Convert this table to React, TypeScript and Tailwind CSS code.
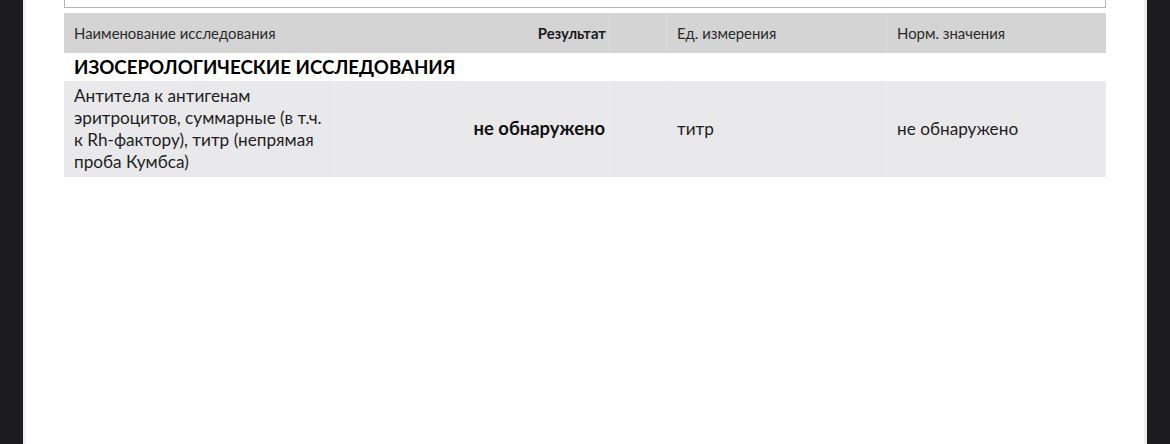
import React from "react";

export default function App() {
  return (
    <div className="flex h-[444px] w-[1170px] overflow-hidden bg-[#1c1c1e] font-['Lato',_'Noto_Sans',_sans-serif]">
      <div className="w-[23px] shrink-0" />
      <div className="flex w-[1124px] shrink-0 bg-white">
        <div className="w-[3px] shrink-0 bg-[#efefef]" />
        <div className="flex-1 pl-[38px] pr-[38px]">
          <div className="h-[8px] border-x border-b border-[#b4b4b4]" />
          <div className="mt-[5px] grid grid-cols-[271px_275px_57px_220px_219px]">
            {/* header */}
            <div className="flex h-[40px] items-center bg-[#d4d4d4] pl-[10px] text-[14.9px] text-[#2a2a2a]">
              Наименование исследования
            </div>
            <div className="flex h-[40px] items-center justify-end border-r border-[#d9d9d9] bg-[#d4d4d4] pr-[3px] text-[14.9px] font-bold text-[#1a1a1a]">
              Результат
            </div>
            <div className="h-[40px] border-r border-[#d9d9d9] bg-[#d4d4d4]" />
            <div className="flex h-[40px] items-center border-r border-[#d9d9d9] bg-[#d4d4d4] pl-[10px] text-[14.9px] text-[#2a2a2a]">
              Ед. измерения
            </div>
            <div className="flex h-[40px] items-center bg-[#d4d4d4] pl-[10px] text-[14.9px] text-[#2a2a2a]">
              Норм. значения
            </div>

            {/* section */}
            <div className="col-span-5 flex h-[28px] items-center pl-[10px] text-[18.7px] font-bold text-black">
              ИЗОСЕРОЛОГИЧЕСКИЕ ИССЛЕДОВАНИЯ
            </div>

            {/* data row */}
            <div className="flex h-[96px] items-center border-r border-[#ececee] bg-[#e9e9eb] pl-[10px] pr-[2px] text-[17.2px] leading-[22px] text-[#1e1e1e]">
              Антитела к антигенам эритроцитов, суммарные (в т.ч. к Rh-фактору), титр (непрямая проба Кумбса)
            </div>
            <div className="flex h-[96px] items-center justify-end border-r border-[#ececee] bg-[#e9e9eb] pr-[4px] text-[18.4px] font-bold text-[#111]">
              не обнаружено
            </div>
            <div className="h-[96px] border-r border-[#ececee] bg-[#e9e9eb]" />
            <div className="flex h-[96px] items-center border-r border-[#ececee] bg-[#e9e9eb] pl-[10px] text-[17.2px] text-[#1e1e1e]">
              титр
            </div>
            <div className="flex h-[96px] items-center bg-[#e9e9eb] pl-[10px] text-[17.2px] text-[#1e1e1e]">
              не обнаружено
            </div>
          </div>
        </div>
        <div className="w-[3px] shrink-0 bg-[#efefef]" />
      </div>
      <div className="flex-1" />
    </div>
  );
}
